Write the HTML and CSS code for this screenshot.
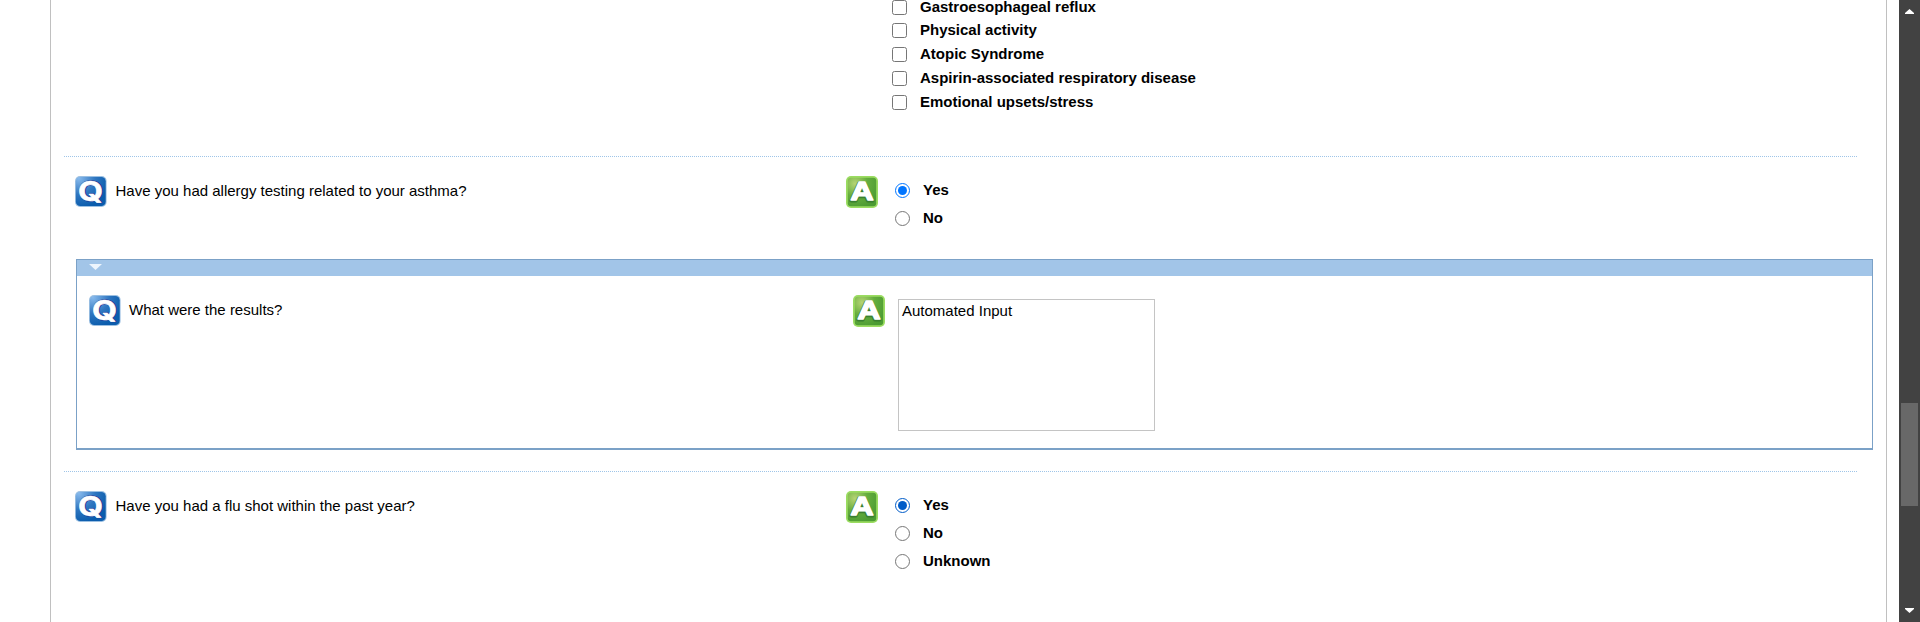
FILE: index.html
```html
<!DOCTYPE html>
<html lang="en">
<head>
<meta charset="utf-8">
<title>Asthma questionnaire</title>
<link rel="stylesheet" href="styles.css">
</head>
<body>
<svg class="defs" width="0" height="0" aria-hidden="true">
  <defs>
    <radialGradient id="blue" cx=".1" cy=".05" r="1">
      <stop offset="0" stop-color="#86b9ec"/><stop offset=".55" stop-color="#2f76c0"/><stop offset="1" stop-color="#0b5dad"/>
    </radialGradient>
    <radialGradient id="green" cx=".25" cy=".2" r=".9">
      <stop offset="0" stop-color="#b5d474"/><stop offset=".5" stop-color="#65ad3d"/><stop offset="1" stop-color="#4b9b32"/>
    </radialGradient>
    <symbol id="q-icon" viewBox="0 0 32 32">
      <rect x="0" y="0" width="31.6" height="31" rx="5" fill="#9cc0e2"/>
      <rect x=".9" y=".9" width="29.8" height="29.2" rx="4.4" fill="url(#blue)"/>
      <text class="letter q-shadow" x="16" y="25.4" text-anchor="middle" textLength="25" lengthAdjust="spacingAndGlyphs">Q</text>
      <text class="letter q-letter" x="15.6" y="24.9" text-anchor="middle" textLength="25" lengthAdjust="spacingAndGlyphs">Q</text>
    </symbol>
    <symbol id="a-icon" viewBox="0 0 32 32">
      <rect x="0" y="0" width="32" height="32" rx="5" fill="#9bdc61"/>
      <rect x="1.8" y="1.8" width="28.4" height="28.4" rx="3" fill="url(#green)"/>
      <text class="letter a-shadow" x="15.8" y="25.2" text-anchor="middle" textLength="23" lengthAdjust="spacingAndGlyphs">A</text>
      <text class="letter a-letter" x="16" y="24.2" text-anchor="middle" textLength="23" lengthAdjust="spacingAndGlyphs">A</text>
    </symbol>
  </defs>
</svg>
<div class="window">
  <main class="sheet">
    <section class="triggers">
      <label class="check"><input type="checkbox">Gastroesophageal reflux</label>
      <label class="check"><input type="checkbox">Physical activity</label>
      <label class="check"><input type="checkbox">Atopic Syndrome</label>
      <label class="check"><input type="checkbox">Aspirin-associated respiratory disease</label>
      <label class="check"><input type="checkbox">Emotional upsets/stress</label>
    </section>
    <section class="item allergy">
      <svg class="icon"><use href="#q-icon"/></svg>
      <p class="question">Have you had allergy testing related to your asthma?</p>
      <svg class="icon"><use href="#a-icon"/></svg>
      <div class="options">
        <label class="radio"><input type="radio" name="allergy" checked>Yes</label>
        <label class="radio"><input type="radio" name="allergy">No</label>
      </div>
    </section>
    <section class="panel">
      <div class="panel-head"><svg width="13" height="6"><path d="M0 0H13L6.5 6Z" fill="#edf5fd"/></svg></div>
      <div class="panel-body">
        <svg class="icon"><use href="#q-icon"/></svg>
        <p class="question">What were the results?</p>
        <svg class="icon"><use href="#a-icon"/></svg>
        <textarea class="answer" spellcheck="false">Automated Input</textarea>
      </div>
    </section>
    <section class="item flu">
      <svg class="icon"><use href="#q-icon"/></svg>
      <p class="question">Have you had a flu shot within the past year?</p>
      <svg class="icon"><use href="#a-icon"/></svg>
      <div class="options">
        <label class="radio"><input class="active" type="radio" name="flu" checked>Yes</label>
        <label class="radio"><input type="radio" name="flu">No</label>
        <label class="radio"><input type="radio" name="flu">Unknown</label>
      </div>
    </section>
  </main>
  <div class="scrollbar">
    <svg width="9" height="5"><path d="M0 5V4L4.5 0L9 4V5Z" fill="#fff"/></svg>
    <div class="thumb"></div>
    <svg width="9" height="5"><path d="M0 0V1L4.5 5L9 1V0Z" fill="#fff"/></svg>
  </div>
</div>
</body>
</html>
```
FILE: styles.css
```css
* { box-sizing: border-box; }
body { margin: 0; background: #fff; color: #000; font: 15px/18px "Liberation Sans", Arial, sans-serif; overflow: hidden; }
.defs { position: absolute; }
.window { display: flex; height: 622px; padding-left: 50px; }
.sheet { width: 1837px; margin-right: 12px; border: solid #c0c0c0; border-width: 0 1px; }
.triggers { height: 156px; padding-left: 841px; }
.check { display: flex; align-items: center; height: 24px; gap: 13px; font-weight: bold; line-height: 22px; }
.check:first-child { height: 18px; line-height: 14px; align-items: flex-start; }
.check input { width: 15px; height: 15px; margin: 0; }
.item { display: grid; grid-template-columns: 32px 723px 32px 1fr; column-gap: 8px; width: 1793px; margin-left: 13px; padding: 20px 0 0 11px; background: repeating-linear-gradient(90deg, #9fc5e8 0 1px, #fff 1px 2px) top / 100% 1px no-repeat; }
.allergy { height: 103px; }
.icon { display: block; width: 32px; height: 32px; }
.question { margin: 6px 0 0 .5px; }
.options { margin-top: -4px; padding: 4px 0 0 9px; }
.radio { display: flex; align-items: center; height: 28px; gap: 13px; font-weight: bold; }
.radio input { width: 15px; height: 15px; margin: 0; }
.radio input.active { accent-color: #005cc8; }
.panel { width: 1797px; height: 191px; margin-left: 25px; border: 1px solid #7ba1c7; border-bottom-width: 2px; }
.panel-head { height: 16px; padding: 4px 0 0 12px; background: #a2c5e8; }
.panel-head svg { display: block; }
.panel-body { display: grid; grid-template-columns: 32px 716px 32px 257px; column-gap: 8px; padding: 19px 0 0 12px; align-items: start; }
.panel-body .question { margin-left: 0; }
.panel-body .answer { margin: 4px 0 0 5px; width: 257px; height: 132px; padding: 2px 3px; border: 1px solid #c4c4c4; font: inherit; resize: none; outline: 0; }
.flu { margin-top: 21px; }
.scrollbar { display: flex; flex-direction: column; align-items: center; width: 21px; padding: 9px 1px 9px 0; background: #424242; }
.thumb { width: 17px; height: 103px; margin: 389px 0 102px; background: #686868; }
.letter { font-family: "Liberation Sans", Arial, sans-serif; font-weight: bold; stroke-linejoin: round; }
.q-letter, .q-shadow { font-family: Inter, "Liberation Sans", sans-serif; font-size: 27px; }
.q-letter { fill: #fff; stroke: #fff; stroke-width: .6px; }
.q-shadow { fill: #243a96; stroke: #243a96; stroke-width: 1.6px; }
.a-letter, .a-shadow { font-size: 26px; }
.a-letter { fill: #fff; stroke: #fff; stroke-width: 1.6px; }
.a-shadow { fill: #3a8030; stroke: #3a8030; stroke-width: 3px; }
```
